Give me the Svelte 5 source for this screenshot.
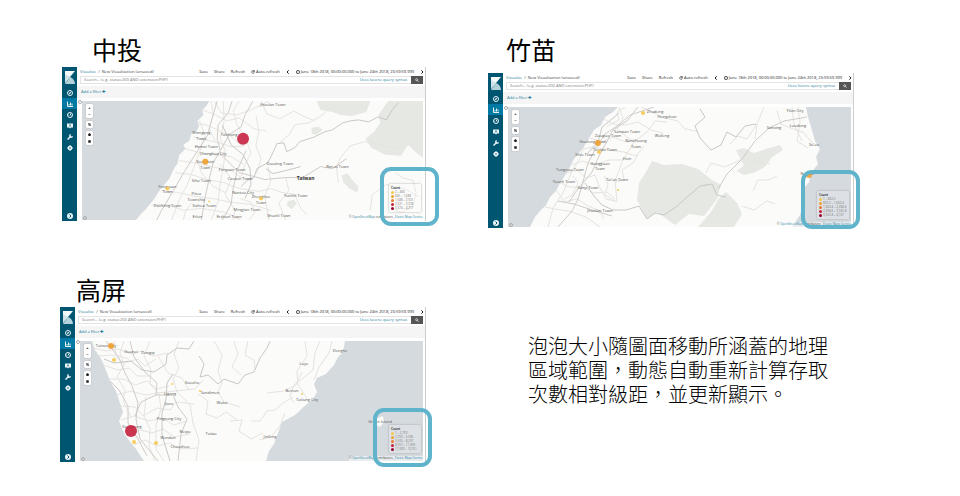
<script>
	const legendColors = ['#f5c84c', '#f0a02f', '#e8792c', '#c5203d', '#9b0030'];
	const menu = ['Save', 'Share', 'Refresh'];
	const navItems = ['Discover', 'Visualize', 'Dashboard', 'Timelion', 'Dev Tools', 'Management'];

	// Map geometry is in a 343 x 120 view box; labels are [text, x, y]
	const maps = [
		{
			id: 'central',
			title: '中投',
			sea: ['0,0 128,0 125,5 121,9 122,14 116,20 118,25 115,31 110,33 108,40 102,44 104,48 98,54 96,63 93,67 88,78 78,90 73,98 68,104 64,109 60,113 54,120 0,120'],
			forest: [
				'236,0 290,0 286,11 272,15 260,14 252,11 240,9',
				'308,0 343,0 343,57 334,50 328,44 321,55 305,54 291,47 285,38 294,31 300,22 298,14 304,6',
				'231,27 238,26 242,29 236,34 231,33',
				'261,75 267,73 273,81 278,86 277,92 269,88 263,82',
				'207,101 213,99 216,103 211,109 206,105'
			],
			rivers: [
				'160,86 166,80 173,77 176,68 187,62 192,52 196,43 203,42 206,51 214,47 219,41 234,36 244,31 252,29 262,22 270,20 278,19 288,21 298,16 306,19 312,9 318,2',
				'141,24 150,44 162,54 169,68 170,84 164,98',
				'185,68 192,73 205,70 220,66'
			],
			highways: [
				'151,0 147,12 137,24 136,38 139,50 132,62 128,78 124,96 120,120',
				'172,0 164,14 160,26 148,34 139,50',
				'138,52 148,62 158,72 166,74 184,79 204,77 222,77 240,66 252,68 266,58',
				'165,50 156,70 152,88 150,104 141,120',
				'136,0 131,17 126,35 115,52 103,71 92,90 80,110 75,120'
			],
			roads: [
				'133,0 140,12 156,14 172,8 188,0',
				'121,9 134,14 146,20 158,17 173,28 185,30',
				'117,22 130,26 142,32 148,34 162,46',
				'112,36 128,40 138,42 150,46 164,45',
				'104,48 118,52 132,54 150,56 163,64',
				'98,60 112,62 130,66 150,70 160,77 172,79',
				'94,72 110,74 126,79 142,82 158,88 178,91',
				'80,90 96,92 114,96 131,98 150,102 170,104 190,110',
				'70,105 86,104 102,110 120,108 144,112 160,120',
				'118,20 124,35 118,52 112,68 106,84 98,99 90,120',
				'130,0 132,14 128,28 134,40',
				'142,0 143,20 139,38 144,50 142,68 139,83 137,101 130,120',
				'158,0 152,10 156,24 164,36 170,52 164,64 160,76',
				'175,15 178,30 175,45 180,58 176,73',
				'187,66 190,80 184,96 188,120',
				'205,77 208,90 198,103 205,120',
				'178,91 190,88 201,92 214,94 220,108 226,114',
				'180,0 186,13 199,18 213,10 222,15 234,20',
				'199,42 209,33 214,24 228,22 242,14 250,5',
				'258,82 256,67 260,57 270,45 284,41 300,44 321,49',
				'110,103 104,111 102,120',
				'159,98 170,102 174,112 168,120',
				'139,63 150,78 144,94 154,110 152,120',
				'116,60 120,72 132,86 144,92',
				'315,72 322,77 333,80 336,92 333,105 322,112 312,109',
				'290,110 292,94 306,84 326,89 338,96'
			],
			labels: [
				['Shengang', 120, 33], ['Town', 120, 39], ['Taichung', 148, 35], ['Hemei Town', 125, 47],
				['Changhua City', 132, 54], ['Sioushuei', 124, 62], ['Town', 124, 68], ['Fenyuan Town', 151, 70],
				['Caotun Town', 159, 79], ['Sihu Town', 120, 81], ['Fangyuan', 86, 88], ['Town', 86, 93],
				['Pitou', 115, 95], ['Township', 115, 101], ['Dacheng Town', 86, 107], ['Sizhou Town', 123, 107],
				['Nantou City', 162, 94], ['Zhongliao', 180, 98], ['Town', 180, 104], ['Mingjian Town', 166, 111],
				['Ershuei Town', 148, 118], ['Erlun', 116, 118], ['Shueili Town', 198, 117], ['Guoxing Town', 199, 64],
				["Ren-ai Town", 257, 67], ['Yuchih Town', 215, 97], ['Jhuolan Town', 192, 5]
			],
			country: ['Taiwan', 225, 79],
			bubbles: [[162, 38, 6, 3], [124, 61, 3, 1], [86, 88, 2, 0], [128, 101, 1, 0], [180, 98, 2, 0]],
			ranges: ['2 – 845', '845 – 1,688', '1,688 – 2,531', '2,531 – 3,374', '3,374 – 4,217']
		},
		{
			id: 'north',
			title: '竹苗',
			sea: [
				'0,0 110,0 105,5 97,10 93,18 86,23 80,33 74,42 66,52 60,64 52,76 48,84 42,90 38,98 32,104 27,110 22,120 0,120',
				'298,0 343,0 343,120 284,120 292,108 296,94 294,84 301,75 303,66 310,57 308,50 312,42 307,34 304,23 300,10'
			],
			forest: [
				'129,93 131,76 138,65 144,54 156,58 174,57 190,62 204,73 213,78 209,92 196,109 181,107 167,118 149,105 139,112',
				'190,120 203,105 211,91 218,85 229,96 234,107 226,120',
				'228,43 236,41 246,46 258,42 272,38 275,43 264,50 257,60 245,66 236,68 228,64 236,59'
			],
			rivers: [
				'77,76 86,89 94,98 105,103 118,103 131,99 139,112 147,106 156,108 168,100 178,91 192,79 204,77 209,88 218,90',
				'192,2 197,10 187,19 192,31 203,43 213,38 219,25 228,30 237,19 248,17',
				'111,6 104,12 94,20 90,35 79,47'
			],
			highways: [
				'146,0 122,8 112,17 97,27 88,41 80,56 76,71 70,92 64,104 50,120',
				'130,0 119,14 105,23 91,49 84,65 69,83 61,95',
				'210,82 219,67 234,52 247,34 261,21 276,14 299,10',
				'50,94 66,97 84,103 104,109'
			],
			roads: [
				'111,0 115,11 109,22 119,30 126,35 115,53 107,74 109,94',
				'96,12 105,17 118,18 130,15 143,23 155,26',
				'82,31 94,35 105,30 118,35 130,32 140,24 147,14 159,15',
				'75,42 86,40 100,43 116,45 128,49 136,39',
				'64,58 74,54 87,58 101,53 115,53',
				'58,66 69,63 78,71 87,68 91,79 98,92 107,94',
				'51,75 61,80 75,80 86,86 99,85 107,92',
				'49,84 56,95 69,92 80,99 92,104 96,112',
				'37,100 47,102 61,104 78,110 92,120',
				'78,32 72,51 63,66 56,84 45,101 40,120',
				'108,75 116,72 114,63 125,56 130,47',
				'133,0 143,4 153,10 170,14 177,22 189,24',
				'198,66 203,56 217,60 232,53 247,53 262,57',
				'269,4 273,17 285,22 295,25 305,37',
				'284,0 286,17 294,34',
				'290,0 292,15 289,34 300,41',
				'249,17 239,32 230,29 222,37',
				'256,0 249,17 247,32',
				'109,95 97,88 100,77 96,69',
				'117,0 109,5 111,13 99,19',
				'65,69 70,76 64,88 56,92',
				'245,84 250,73 260,73 269,69',
				'234,99 246,103 259,94 267,97'
			],
			labels: [
				['Zhudong', 147, 6], ['Hengshan', 159, 11], ['Wufeng', 154, 30], ['Sanwan Town', 119, 26],
				['Zaoqiao Town', 100, 30], ['Houlong Town', 85, 36], ['Nanzhuang', 128, 35], ['Town', 128, 41],
				['Touwu Town', 97, 44], ['Sihu Town', 77, 49], ['Hsin', 119, 53], ['Gongguan', 92, 58], ['Town', 92, 63],
				['Tungsiao Town', 62, 64], ['Yuanli Town', 56, 76], ['Sanyi Town', 80, 82], ["Tai'an Town", 109, 74],
				['Jhuolan Town', 92, 105], ['Yilan City', 287, 5], ['Sanxing', 266, 22], ['Luodong', 290, 20],
				["Su'ao", 306, 39], ["Nan'ao", 299, 68]
			],
			bubbles: [[90, 36, 3, 1], [91, 45, 2, 0], [135, 6, 2, 0], [110, 83, 1, 0], [301, 68, 3, 1]],
			ranges: ['1 – 832.2', '832.2 – 1,663.4', '1,663.4 – 2,494.6', '2,494.6 – 3,325.8', '3,325.8 – 4,157']
		},
		{
			id: 'south',
			title: '高屏',
			sea: [
				'0,0 12,0 15,9 20,16 23,22 27,32 30,40 36,50 40,62 43,71 39,80 42,88 45,94 51,102 56,108 64,120 0,120',
				'265,0 343,0 343,120 186,120 189,110 194,103 198,92 202,81 215,74 228,62 233,58 237,51 234,43 237,37 246,33 254,24 258,16 263,11'
			],
			island: '295,78 303,75 304,81 300,86 296,84',
			forest: [],
			rivers: [
				'24,18 34,22 51,20 62,29 74,31 86,23 87,14 97,7 109,8 114,0',
				'190,0 187,7 180,17 174,31 165,34 158,43 144,38 138,43 128,34 120,36 124,23 119,15',
				'90,120 82,94 82,72 86,58 87,42 93,33'
			],
			highways: [
				'26,0 39,17 45,32 52,45 58,62 56,78 60,98 78,120',
				'50,0 54,16 65,31 77,42 76,54 61,61 55,75',
				'76,54 93,54 98,66 107,78 101,93 98,120',
				'30,40 39,49 48,65 48,82 58,98 67,115'
			],
			roads: [
				'14,7 26,10 38,8 52,13 62,10 73,15 88,12',
				'18,15 33,14 44,22 58,18 65,25 76,18',
				'23,24 38,29 49,27 57,35 70,35',
				'29,38 44,38 55,44 67,40 77,48 89,45',
				'37,54 51,50 65,54 78,52 95,50 115,48 123,39',
				'41,65 55,66 63,75 77,67 90,69 96,61 114,63',
				'41,79 54,75 69,80 82,77 94,84 107,80',
				'46,93 61,89 72,92 83,88 94,96 110,93',
				'54,104 65,99 77,105 89,102 100,108 118,107',
				'44,0 40,12 44,24 37,36 45,49 43,60 51,76',
				'70,0 64,15 71,29 70,43 79,53 81,68 76,84 76,108 84,120',
				'99,0 94,13 99,27 93,38 97,51 110,64 113,82 119,99 116,120',
				'66,56 64,75 70,88 69,105 75,120',
				'134,0 142,14 138,30 142,42 138,51 144,61 160,66',
				'118,53 128,60 126,73 137,77 146,71 157,79',
				'150,80 162,79 159,90 171,98 183,92',
				'225,0 227,15 217,30 218,44 228,59',
				'240,0 235,12 233,29 223,37 214,44 210,55 214,62',
				'252,0 249,12 239,26 234,39',
				'154,0 158,13 152,26 161,34',
				'168,0 165,14 174,19 175,28',
				'213,56 203,62 195,69 187,70 180,80 171,80',
				'205,72 200,85 191,96 179,99',
				'187,52 204,50 216,44 222,31',
				'34,0 36,14 49,18',
				'78,15 88,32 102,37 109,49'
			],
			labels: [
				['Tainan City', 26, 6], ['Guanei', 51, 12], ['Dongqi', 68, 13], ['Gaoshu', 112, 43], ['Ligang', 90, 54],
				['Jiuru', 89, 64], ['Sandimen', 130, 53], ['Wutai', 142, 63], ['Pingtung City', 89, 79],
				['Kaohsiung', 52, 87], ['Neipu', 105, 92], ['Taiwu', 131, 94], ['Wandan', 88, 98], ['Chaozhou', 100, 107],
				['Donghe', 260, 11], ['Luye', 224, 24], ['Beinan', 212, 51], ['Taitung City', 227, 60],
				['Jinfeng', 190, 97], ['Green Island', 300, 82]
			],
			bubbles: [[51, 90, 6, 3], [31, 5, 3, 1], [34, 19, 2, 0], [54, 101, 2, 0], [76, 102, 2, 0], [92, 43, 1, 0], [120, 50, 1, 0], [222, 53, 1, 0]],
			ranges: ['1 – 2,753', '2,753 – 5,505', '5,505 – 8,257', '8,257 – 11,009', '11,009 – 13,761']
		}
	];
</script>

<main class="slide" lang="zh-Hant">
	{#each maps as map}
		<section class="panel {map.id}">
			<h2>{map.title}</h2>
			{@render kibana(map)}
		</section>
	{/each}
	<p class="note">泡泡大小隨圖面移動所涵蓋的地理區域範圍，動態自動重新計算存取次數相對級距，並更新顯示。</p>
</main>

{#snippet kibana(map)}
	<div class="window" lang="en">
		<!-- Sidebar -->
		<nav class="sidebar">
			<a class="logo" href="#home" aria-label="Kibana">
				<svg viewBox="0 0 11 13">
					<path d="M0 0h10L0 12z" fill="#f4fafb" />
					<path d="M0 3l5 3-5 6z" fill="#cfe3e8" />
					<path d="M0 13l5-7c3 1 5 4 5 7z" fill="#b4d2da" />
				</svg>
			</a>
			{#each navItems as item}
				<a class="nav-item" class:active={item === 'Visualize'} href="#{item}" aria-label={item}>
					{@render icon(item)}
				</a>
			{/each}
			<button class="collapse" aria-label="Collapse">{@render icon('Collapse')}</button>
		</nav>

		<div class="content">
			<!-- Top bar -->
			<header class="topbar">
				<span class="crumbs"><a href="#visualize">Visualize</a> &nbsp;/&nbsp; New Visualization (unsaved)</span>
				<div class="menu">
					{#each menu as item}
						<button>{item}</button>
					{/each}
					<button>{@render icon('Reload')}Auto-refresh</button>
					<button aria-label="Earlier">{@render icon('Left')}</button>
					<button class="range">{@render icon('Clock')}June 18th 2018, 00:00:00.000 to June 24th 2018, 23:59:59.999</button>
					<button aria-label="Later">{@render icon('Right')}</button>
				</div>
			</header>

			<!-- Query -->
			<div class="search">
				<input type="text" aria-label="Search" placeholder="Search... (e.g. status:200 AND extension:PHP)" />
				<a href="#syntax">Uses lucene query syntax</a>
				<button aria-label="Run query">{@render icon('Search')}</button>
			</div>
			<div class="filters"><a href="#filter">Add a filter <b>✚</b></a></div>

			<!-- Map -->
			<div class="map">
				<svg class="tiles" viewBox="0 0 343 120" preserveAspectRatio="xMinYMin slice">
					<rect class="land" width="343" height="120" />
					{#each map.forest as points}<polygon class="forest" {points} />{/each}
					{#each map.roads as points}<polyline class="road" {points} />{/each}
					{#each map.highways as points}<polyline class="highway" {points} />{/each}
					{#each map.rivers as points}<polyline class="river" {points} />{/each}
					{#each map.sea as points}<polygon class="sea" {points} />{/each}
					{#if map.island}<polygon class="land" points={map.island} />{/if}
					{#each map.labels as [text, x, y]}<text {x} {y}>{text}</text>{/each}
					{#if map.country}
						<text class="country" x={map.country[1]} y={map.country[2]}>{map.country[0]}</text>
					{/if}
					{#each map.bubbles as [cx, cy, r, level]}
						<circle class="bubble" {cx} {cy} {r} fill={legendColors[level]} />
					{/each}
				</svg>
				<div class="controls">
					<div class="control"><button>+</button><button>−</button></div>
					<div class="control"><button aria-label="Fit bounds">{@render icon('Crop')}</button></div>
					<div class="control">
						<button aria-label="Draw polygon">{@render icon('Pentagon')}</button>
						<button aria-label="Draw rectangle">{@render icon('Square')}</button>
					</div>
				</div>
				<span class="handle top"></span>
				<span class="handle bottom"></span>
				<div class="legend">
					<strong>Count</strong>
					{#each map.ranges as range, i}
						<div><i class="level{i}"></i>{range}</div>
					{/each}
				</div>
				<small class="credit">© <a href="#osm">OpenStreetMap</a> contributors , <a href="#ems">Elastic Maps Service</a></small>
			</div>
		</div>
		<div class="highlight"></div>
	</div>
{/snippet}

{#snippet icon(name)}
	<svg class="icon" viewBox="0 0 12 12" fill="none" stroke="currentColor" stroke-width="2" aria-hidden="true">
		{#if name === 'Discover'}
			<circle cx="6" cy="6" r="5" /><path d="M9 3L7 7 3 9l2-4z" fill="currentColor" stroke="none" />
		{:else if name === 'Visualize'}
			<path d="M1 1v10h11M4 9V6M7 9V3M10 9V5" />
		{:else if name === 'Dashboard'}
			<circle cx="6" cy="6" r="5" /><path d="M6 7l2-4M3 6h1M8 8h1" />
		{:else if name === 'Timelion'}
			<path d="M0 1h12v8H8l-2 2-2-2H0z" fill="currentColor" stroke="none" /><path d="M6 3v4" stroke="#005571" />
		{:else if name === 'Dev Tools'}
			<path d="M1 11l5-5" stroke-width="3" /><path d="M12 4a4 4 0 1 1-4-4L7 3l2 2z" fill="currentColor" stroke="none" />
		{:else if name === 'Management'}
			<circle cx="6" cy="6" r="3" stroke-width="3" /><path d="M6 0v2M6 10v2M0 6h2M10 6h2M2 2l1 1M9 9l1 1M10 2L9 3M2 10l1-1" />
		{:else if name === 'Collapse'}
			<circle cx="6" cy="6" r="6" fill="currentColor" stroke="none" /><path d="M5 3l3 3-3 3" stroke="#005571" />
		{:else if name === 'Reload'}
			<path d="M10 7a4 4 0 1 1-1-4" /><path d="M11 0v5H6z" fill="currentColor" stroke="none" />
		{:else if name === 'Left'}
			<path d="M8 1L3 6l5 5" stroke-width="3" />
		{:else if name === 'Right'}
			<path d="M4 1l5 5-5 5" stroke-width="3" />
		{:else if name === 'Clock'}
			<circle cx="6" cy="6" r="5" /><path d="M6 3v4H4" stroke-width="1" />
		{:else if name === 'Search'}
			<circle cx="5" cy="5" r="3" /><path d="M7 7l4 4" />
		{:else if name === 'Crop'}
			<path d="M3 0v9h9M0 3h9v9M3 9l6-6" />
		{:else if name === 'Pentagon'}
			<path d="M6 0l6 5-2 7H2L0 5z" fill="currentColor" stroke="none" />
		{:else if name === 'Square'}
			<path d="M1 1h10v10H1z" fill="currentColor" stroke="none" />
		{/if}
	</svg>
{/snippet}

<style>
	:global(body) {
		margin: 0;
		background: #fff;
	}

	.slide {
		display: grid;
		grid-template-columns: repeat(2, minmax(0, 1fr));
		gap: 46px 62px;
		padding: 34px 106px 34px 60px;
		color: #000;
		font-family: 'Noto Sans CJK TC', sans-serif;
	}

	h2 {
		margin: 0 0 3px;
		padding-left: 30px;
		font-size: 25px;
		font-weight: 400;
		line-height: 30px;
	}

	.central {
		padding-left: 2px;
	}

	.north h2 {
		margin-bottom: 9px;
		padding-left: 18px;
	}

	.south h2 {
		padding-left: 16px;
	}

	.note {
		margin: 60px 0 0 40px;
		max-width: 300px;
		font-size: 20px;
		font-weight: 300;
		line-height: 24px;
	}

	/* Kibana window */
	.window {
		position: relative;
		display: flex;
		font-family: 'Open Sans', sans-serif;
		font-size: 4px;
		line-height: 6px;
		color: #444;
	}

	a {
		color: #2a7f9e;
		text-decoration: none;
	}

	button {
		display: flex;
		align-items: center;
		justify-content: center;
		gap: 1px;
		margin: 0;
		padding: 0;
		border: 0;
		background: none;
		color: inherit;
		font: inherit;
		white-space: nowrap;
	}

	.icon {
		display: block;
		flex: none;
		width: 4px;
		height: 4px;
	}

	.sidebar {
		display: flex;
		flex: none;
		flex-direction: column;
		width: 15px;
		background: #005571;
	}

	.sidebar .icon {
		width: 6px;
		height: 6px;
	}

	.logo {
		padding: 4px 1px 3px 3px;
	}

	.logo svg {
		display: block;
		width: 11px;
		height: 13px;
	}

	.nav-item,
	.collapse {
		display: flex;
		align-items: center;
		justify-content: center;
		height: 11px;
		color: #e8f3f6;
	}

	.active {
		background: #0079a5;
	}

	.collapse {
		margin-top: auto;
	}

	.content {
		flex: 1;
		min-width: 0;
		padding: 0 2px 1px 5px;
		border-right: 1px solid #ccc;
	}

	.topbar {
		display: flex;
		align-items: center;
		justify-content: space-between;
		height: 9px;
		margin: 0 -1px 0 -2px;
		white-space: nowrap;
	}

	.menu {
		display: flex;
		gap: 6px;
		color: #222;
	}

	.search {
		display: flex;
		align-items: center;
		height: 8px;
		margin-left: -2px;
		box-sizing: border-box;
		border: 1px solid #e4e4e4;
		border-right: 0;
	}

	.search input {
		flex: 1;
		min-width: 0;
		margin: 0;
		padding: 0 3px;
		border: 0;
		outline: 0;
		background: none;
		font: inherit;
	}

	.search input::placeholder {
		color: #777;
	}

	.search button {
		width: 12px;
		height: 8px;
		margin-left: 4px;
		background: #555;
		color: #fff;
	}

	.filters {
		margin: 2px -2px 3px -5px;
		padding: 3px 4px;
		background: #f5f5f5;
	}

	/* Map */
	.map {
		position: relative;
		aspect-ratio: 343 / 120;
	}

	.tiles {
		display: block;
		width: 100%;
		height: 100%;
	}

	.land {
		fill: #fbfbf9;
	}

	.sea {
		fill: #d5dadf;
	}

	.forest {
		fill: #e6e8e3;
	}

	.road,
	.highway,
	.river {
		fill: none;
		stroke: #e6e3e0;
		stroke-linejoin: round;
	}

	.highway {
		stroke: #d0cbc8;
	}

	.river {
		stroke: #c8c8c8;
	}

	text {
		fill: #555;
		font-size: 4px;
		text-anchor: middle;
	}

	.country {
		fill: #333;
		font-size: 5px;
		font-weight: 700;
	}

	.bubble {
		fill-opacity: 0.9;
	}

	.controls {
		position: absolute;
		top: 3px;
		left: 4px;
		display: grid;
		gap: 3px;
	}

	.control {
		border-radius: 1px;
		background: #fff;
		box-shadow: 0 0 1px #777;
		color: #222;
		font-weight: 700;
	}

	.control button {
		width: 7px;
		height: 7px;
	}

	.control .icon {
		width: 3px;
		height: 3px;
	}

	.handle {
		position: absolute;
		left: 1px;
		width: 2px;
		height: 2px;
		border: 1px solid #aaa;
		border-radius: 50%;
	}

	.handle.top {
		top: -1px;
		left: -4px;
	}

	.handle.bottom {
		bottom: 0;
	}

	.legend {
		position: absolute;
		right: 2px;
		bottom: 8px;
		min-width: 28px;
		padding: 2px;
		border-radius: 1px;
		background: rgba(255, 255, 255, 0.2);
		box-shadow: 0 0 2px #999;
		color: #777;
		font-size: 3px;
		line-height: 4px;
		white-space: nowrap;
	}

	.legend strong {
		display: block;
		color: #444;
	}

	.legend div {
		display: flex;
		align-items: center;
		gap: 1px;
	}

	.legend i {
		width: 3px;
		height: 3px;
		border-radius: 50%;
	}

	.level0 {
		background: #f5c84c;
	}

	.level1 {
		background: #f0a02f;
	}

	.level2 {
		background: #e8792c;
	}

	.level3 {
		background: #c5203d;
	}

	.level4 {
		background: #9b0030;
	}

	.credit {
		position: absolute;
		right: 0;
		bottom: 0;
		background: rgba(255, 255, 255, 0.5);
		font-size: 3px;
		line-height: 5px;
	}

	/* Callout around the legend */
	.highlight {
		position: absolute;
		right: -6px;
		bottom: -5px;
		box-sizing: border-box;
		width: 59px;
		height: 59px;
		border: 4px solid #5fb3ca;
		border-radius: 11px;
	}

	.central .highlight {
		right: -13px;
	}

	.north .highlight {
		bottom: -1px;
	}
</style>
